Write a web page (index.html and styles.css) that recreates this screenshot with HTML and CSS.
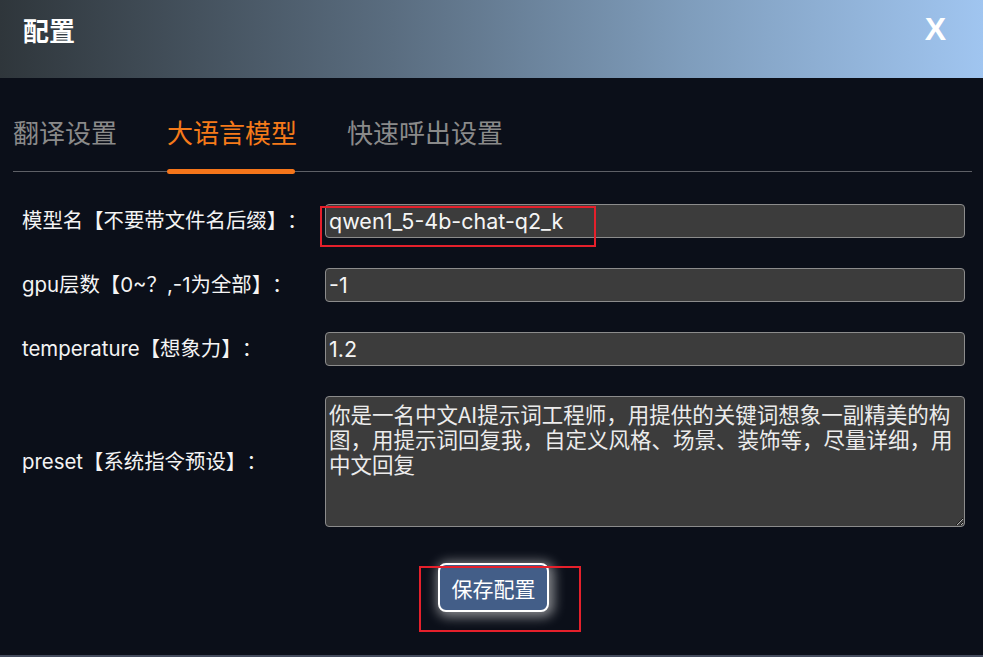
FILE: index.html
```html
<!DOCTYPE html>
<html lang="zh-CN">
<head>
<meta charset="utf-8">
<title>配置</title>
<link rel="stylesheet" href="styles.css">
</head>
<body>
<div class="app">
  <header class="titlebar">
    <h1 class="title">配置</h1>
    <span class="close">X</span>
  </header>
  <main class="panel">
    <nav class="tabs">
      <span class="tab">翻译设置</span>
      <span class="tab active">大语言模型</span>
      <span class="tab">快速呼出设置</span>
    </nav>
    <form class="form">
      <div class="row">
        <label class="label">模型名【不要带文件名后缀】：</label>
        <input class="field" type="text" value="qwen1_5-4b-chat-q2_k">
      </div>
      <div class="row">
        <label class="label">gpu层数【0~？,-1为全部】：</label>
        <input class="field" type="text" value="-1">
      </div>
      <div class="row">
        <label class="label">temperature【想象力】：</label>
        <input class="field" type="text" value="1.2">
      </div>
      <div class="row">
        <label class="label">preset【系统指令预设】：</label>
        <textarea class="area">你是一名中文AI提示词工程师，用提供的关键词想象一副精美的构图，用提示词回复我，自定义风格、场景、装饰等，尽量详细，用中文回复</textarea>
      </div>
      <div class="actions">
        <button class="save" type="button">保存配置</button>
      </div>
    </form>
  </main>
  <div class="strip"></div>
  <div class="annot annot-input"></div>
  <div class="annot annot-button"></div>
</div>
</body>
</html>
```

FILE: styles.css
```css
* { box-sizing: border-box; }
html, body {
  margin: 0;
  padding: 0;
  background: #0b0f19;
}
body {
  font-family: Inter, "Noto Sans CJK SC", sans-serif;
  color: #f2f2f2;
  text-spacing-trim: space-all;
}
.app {
  position: relative;
  height: 657px;
  display: flex;
  flex-direction: column;
  overflow: hidden;
}
.titlebar {
  height: 78px;
  flex: none;
  display: flex;
  justify-content: space-between;
  align-items: flex-start;
  padding: 11px 37px 0 23px;
  background: linear-gradient(90deg, #2f363b 0%, #5a6d80 40%, #7f9dbc 70%, #a0c5f0 100%);
}
.title {
  margin: 0;
  font-family: "Noto Sans CJK SC", sans-serif;
  font-size: 26px;
  line-height: 37px;
  font-weight: 700;
  color: #ffffff;
}
.close {
  font-family: "Liberation Sans", Arial, sans-serif;
  font-weight: 700;
  font-size: 32px;
  line-height: 37px;
  color: #ffffff;
}
.panel {
  flex: 1;
  padding: 0 11px 0 13px;
}
.tabs {
  display: flex;
  gap: 50px;
  padding-top: 35px;
  border-bottom: 1px solid #5e6066;
}
.tab {
  position: relative;
  font-family: "Noto Sans CJK SC", sans-serif;
  font-size: 26px;
  line-height: 38px;
  padding-bottom: 20px;
  color: #8a8a8a;
}
.tab.active {
  color: #f57a1a;
}
.tab.active::after {
  content: "";
  position: absolute;
  left: 0;
  right: 2px;
  bottom: -3px;
  height: 5px;
  border-radius: 3px;
  background: #f5751a;
}
.form {
  display: flex;
  flex-direction: column;
  gap: 30px;
  padding: 32px 7px 0 9px;
}
.row {
  display: grid;
  grid-template-columns: 303px 1fr;
  align-items: center;
}
.label {
  font-size: 20.4px;
  line-height: 26px;
  color: #f4f4f4;
  white-space: nowrap;
  text-spacing-trim: space-all;
}
.field {
  height: 34px;
  width: 100%;
  margin: 0;
  padding: 0 3px;
  border: 1px solid #8c8c8c;
  border-radius: 4px;
  background: #3c3c3c;
  color: #f5f5f5;
  font-family: Inter, "Noto Sans CJK SC", sans-serif;
  font-size: 21.5px;
  outline: none;
}
.area {
  height: 131px;
  width: 100%;
  margin: 0;
  padding: 4px 3px;
  border: 1px solid #8c8c8c;
  border-radius: 4px;
  background: #3c3c3c;
  color: #ececec;
  font-family: "Noto Sans CJK SC", sans-serif;
  font-size: 21.5px;
  line-height: 25px;
  resize: vertical;
  outline: none;
}
.actions {
  display: flex;
  justify-content: center;
  padding-top: 6px;
}
.save {
  width: 111px;
  height: 49px;
  border: 2px solid #ffffff;
  border-radius: 8px;
  background: #435e88;
  color: #ffffff;
  font-family: "Noto Sans CJK SC", sans-serif;
  font-size: 21px;
  box-shadow: 2px 2px 12px 3px rgba(255, 255, 255, 0.5);
  cursor: pointer;
}
.strip {
  height: 2px;
  flex: none;
  background: #444b5d;
}
.annot {
  position: absolute;
  border: 2px solid #e5202b;
  pointer-events: none;
}
.annot-input {
  left: 320px;
  top: 206px;
  width: 276px;
  height: 41px;
}
.annot-button {
  left: 419px;
  top: 566px;
  width: 162px;
  height: 66px;
}
```
